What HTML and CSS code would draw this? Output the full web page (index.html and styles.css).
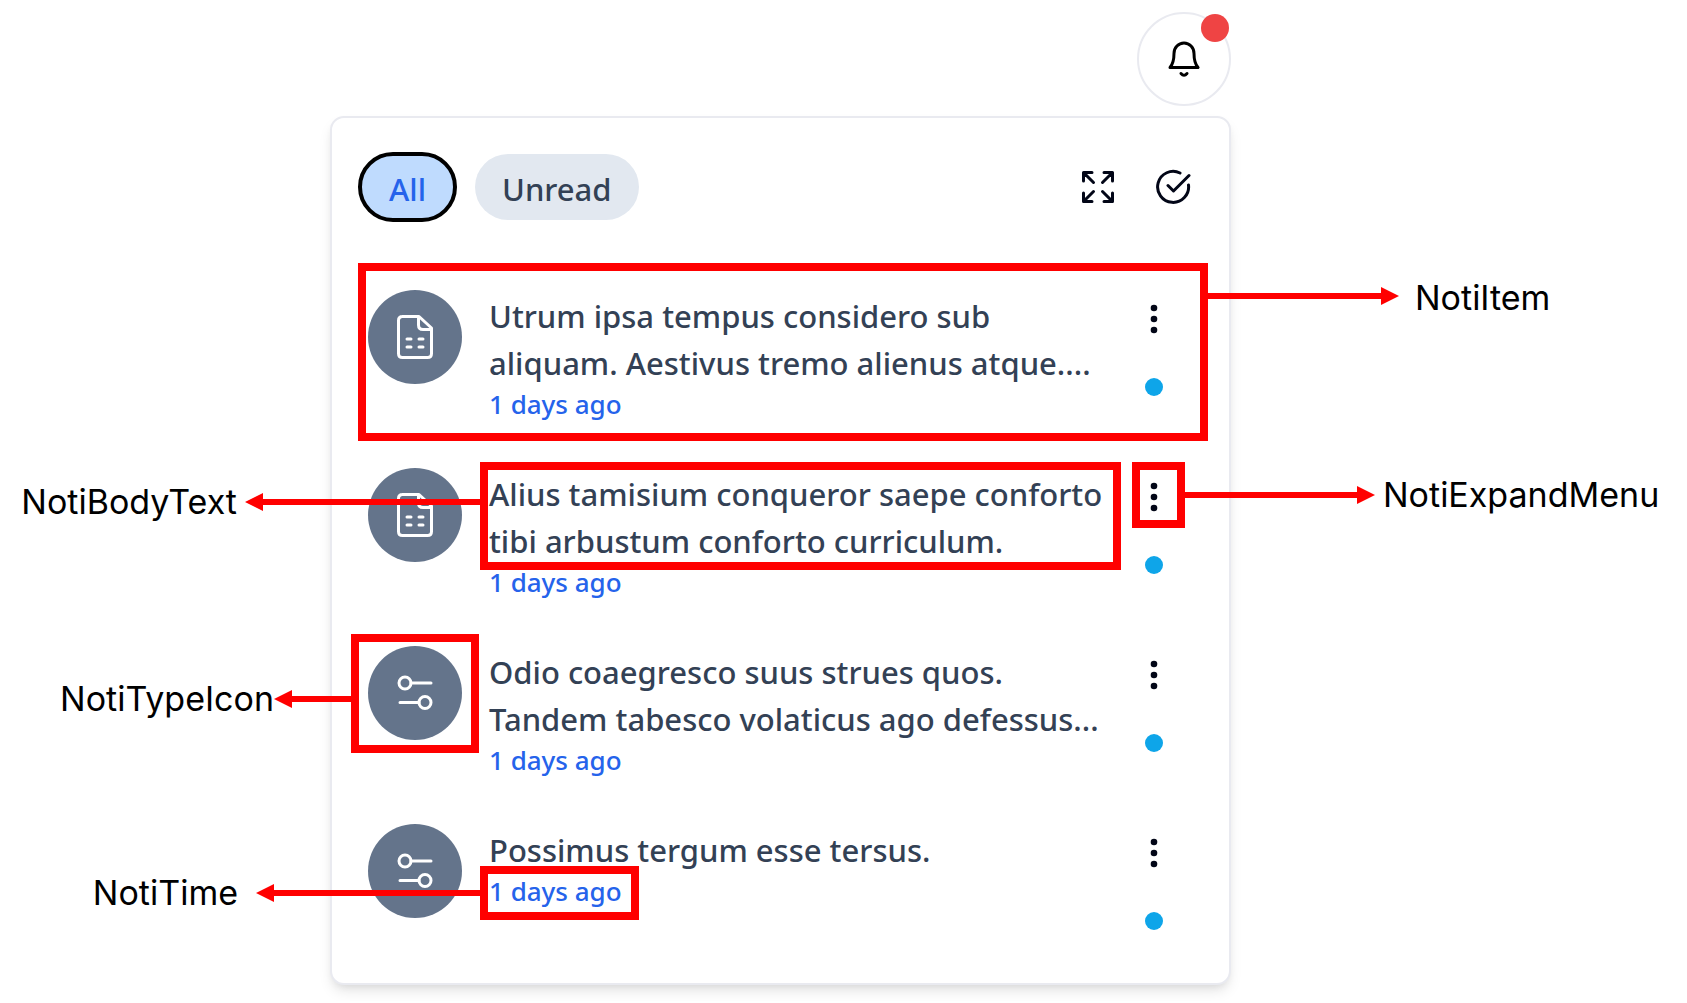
FILE: index.html
```html
<!DOCTYPE html>
<html lang="en">
<head>
  <meta charset="utf-8">
  <meta name="viewport" content="width=device-width, initial-scale=1">
  <title>Notification components</title>
  <link rel="stylesheet" href="styles.css">
</head>
<body>
  <svg class="sprite" aria-hidden="true">
    <symbol id="icon-report" viewBox="0 0 36 44">
      <path d="M5 1.500H22L34.500 13V38.500Q34.500 42.500 30.500 42.500H5.500Q1.500 42.500 1.500 38.500V5.500Q1.500 1.500 5.500 1.500Z M21.500 2V10Q21.500 14.500 26 14.500H34"/>
      <path d="M10 24H14 M22 24H26 M10 32H14 M22 32H26"/>
    </symbol>
    <symbol id="icon-settings" viewBox="0 0 36 36">
      <circle cx="8" cy="8" r="6"/>
      <path d="M14 8H34 M3 27.500H22"/>
      <circle cx="28" cy="27.500" r="6"/>
    </symbol>
    <symbol id="icon-more" viewBox="0 0 8 30">
      <circle cx="4" cy="4" r="3.300"/><circle cx="4" cy="15" r="3.300"/><circle cx="4" cy="26" r="3.300"/>
    </symbol>
    <symbol id="icon-arrow" viewBox="0 0 18 18">
      <path d="M0 0 18 9 0 18Z"/>
    </symbol>
  </svg>

  <main class="page">
    <div class="column">
      <button class="bell" type="button" aria-label="Notifications">
        <svg class="bell-icon" viewBox="0 0 32 36" aria-hidden="true">
          <path d="M2 26.500C5 23 6 19 6 12.500A10 10.500 0 0 1 26 12.500C26 19 27 23 30 26.500Z"/>
          <path d="M13 32.500Q16 36 19 32.500"/>
        </svg>
        <span class="bell-badge"></span>
      </button>

      <section class="panel" aria-label="Notifications">
        <header class="toolbar">
          <button class="tab tab-active" type="button">All</button>
          <button class="tab" type="button">Unread</button>
          <div class="tools">
            <button class="tool" type="button" aria-label="Expand">
              <svg class="tool-icon" viewBox="0 0 36 36" aria-hidden="true">
                <path d="M3.500 12V3.500H12 M4 4 13.500 13.500 M24 3.500H32.500V12 M32 4 22.500 13.500 M3.500 24V32.500H12 M4 32 13.500 22.500 M24 32.500H32.500V24 M32 32 22.500 22.500"/>
              </svg>
            </button>
            <button class="tool" type="button" aria-label="Mark all as read">
              <svg class="tool-icon" viewBox="0 0 36 36" aria-hidden="true">
                <path d="M25 4A15.500 15.500 0 1 0 33.500 16 M13 16.500 18.500 22 34 6.500"/>
              </svg>
            </button>
          </div>
        </header>

        <ul class="list">
          <li class="item">
            <span class="type"><svg class="icon-report"><use href="#icon-report"/></svg></span>
            <div class="content">
              <p class="body">Utrum ipsa tempus considero sub<br>aliquam. Aestivus tremo alienus atque....</p>
              <time class="time">1 days ago</time>
            </div>
            <div class="side">
              <button class="more" type="button" aria-label="More"><svg class="icon-more"><use href="#icon-more"/></svg></button>
              <span class="unread"></span>
            </div>
            <div class="mark mark-item">
              <div class="leader to-right lead-item">
                <span class="line"></span><svg class="head"><use href="#icon-arrow"/></svg>
                <span class="label">NotiItem</span>
              </div>
            </div>
          </li>
          <li class="item">
            <span class="type"><svg class="icon-report"><use href="#icon-report"/></svg></span>
            <div class="content">
              <p class="body">Alius tamisium conqueror saepe conforto<br>tibi arbustum conforto curriculum.</p>
              <time class="time">1 days ago</time>
              <div class="mark mark-body">
                <div class="leader to-left lead-body">
                  <span class="line"></span><svg class="head"><use href="#icon-arrow"/></svg>
                  <span class="label">NotiBodyText</span>
                </div>
              </div>
            </div>
            <div class="side">
              <button class="more" type="button" aria-label="More"><svg class="icon-more"><use href="#icon-more"/></svg></button>
              <span class="unread"></span>
              <div class="mark mark-menu">
                <div class="leader to-right lead-menu">
                  <span class="line"></span><svg class="head"><use href="#icon-arrow"/></svg>
                  <span class="label">NotiExpandMenu</span>
                </div>
              </div>
            </div>
          </li>
          <li class="item">
            <span class="type">
              <svg class="icon-settings"><use href="#icon-settings"/></svg>
              <span class="mark mark-type">
                <span class="leader to-left lead-type">
                  <span class="line"></span><svg class="head"><use href="#icon-arrow"/></svg>
                  <span class="label">NotiTypeIcon</span>
                </span>
              </span>
            </span>
            <div class="content">
              <p class="body">Odio coaegresco suus strues quos.<br>Tandem tabesco volaticus ago defessus...</p>
              <time class="time">1 days ago</time>
            </div>
            <div class="side">
              <button class="more" type="button" aria-label="More"><svg class="icon-more"><use href="#icon-more"/></svg></button>
              <span class="unread"></span>
            </div>
          </li>
          <li class="item">
            <span class="type"><svg class="icon-settings"><use href="#icon-settings"/></svg></span>
            <div class="content">
              <p class="body">Possimus tergum esse tersus.</p>
              <time class="time">1 days ago</time>
              <div class="mark mark-time">
                <div class="leader to-left lead-time">
                  <span class="line"></span><svg class="head"><use href="#icon-arrow"/></svg>
                  <span class="label">NotiTime</span>
                </div>
              </div>
            </div>
            <div class="side">
              <button class="more" type="button" aria-label="More"><svg class="icon-more"><use href="#icon-more"/></svg></button>
              <span class="unread"></span>
            </div>
          </li>
        </ul>
      </section>
    </div>
  </main>
</body>
</html>
```
FILE: styles.css
```css
* {
  box-sizing: border-box;
}

body {
  margin: 0;
  background: #fff;
  color: #334155;
  font-family: "Noto Sans", "Open Sans", sans-serif;
  font-weight: 500;
}

button {
  margin: 0;
  padding: 0;
  border: 0;
  background: none;
  font: inherit;
  color: inherit;
  cursor: pointer;
}

svg {
  display: block;
  flex: none;
  fill: none;
  stroke-linecap: round;
  stroke-linejoin: round;
}

.sprite {
  position: absolute;
  width: 0;
  height: 0;
}

.page {
  display: grid;
  grid-template-columns: 330fr 901fr 456fr;
  padding: 12px 0 16px;
}

.column {
  grid-column: 2;
  display: flex;
  flex-direction: column;
  gap: 10px;
}

/* Bell */
.bell {
  position: relative;
  display: grid;
  place-items: center;
  align-self: flex-end;
  width: 94px;
  height: 94px;
  border: 2px solid #e9eaf0;
  border-radius: 50%;
}

.bell-icon {
  width: 32px;
  height: 36px;
  stroke: #000;
  stroke-width: 3;
}

.bell-badge {
  position: absolute;
  top: 0;
  right: 0;
  width: 28px;
  height: 28px;
  border-radius: 50%;
  background: #ef4444;
}

/* Panel */
.panel {
  padding: 36px 21px 8px 26px;
  border: 2px solid #e9eaf0;
  border-radius: 14px;
  background: #fff;
  box-shadow: 0 8px 14px -2px rgb(0 0 0 / 10%), 0 4px 8px -4px rgb(0 0 0 / 10%);
}

.toolbar {
  display: flex;
  align-items: center;
  gap: 20px;
  padding: 0 17px 43px 2px;
}

.tab {
  min-width: 95px;
  height: 66px;
  padding: 4px 27px 0;
  border-radius: 33px;
  background: #e2e8f0;
  font-size: 31px;
}

.tab-active {
  background: #bfdbfe;
  color: #2563eb;
  outline: 4px solid #000;
  outline-offset: -2px;
}

.tools {
  display: flex;
  gap: 39px;
  margin-left: auto;
}

.tool-icon {
  width: 36px;
  height: 36px;
  stroke: #020617;
  stroke-width: 3;
}

/* Notifications */
.list {
  margin: 0;
  padding: 0;
  list-style: none;
}

.item {
  position: relative;
  display: flex;
  height: 178px;
  padding: 27px 27px 0 10px;
}

.type {
  position: relative;
  display: grid;
  flex: none;
  place-items: center;
  width: 94px;
  height: 94px;
  border-radius: 50%;
  background: #64748b;
}

.icon-report {
  width: 36px;
  height: 44px;
  stroke: #fff;
  stroke-width: 3;
}

.icon-settings {
  width: 36px;
  height: 36px;
  stroke: #fff;
  stroke-width: 3;
}

.content {
  position: relative;
  flex: 1;
  min-width: 0;
  padding-top: 3px;
  margin-left: 27px;
  white-space: nowrap;
}

.body {
  margin: 0;
  font-size: 31px;
  line-height: 47px;
}

.time {
  display: block;
  color: #2563eb;
  font-size: 26px;
  line-height: 34px;
}

.side {
  position: relative;
  display: flex;
  flex: none;
  flex-direction: column;
  align-items: center;
  gap: 44px;
  width: 54px;
  padding-top: 14px;
}

.icon-more {
  width: 8px;
  height: 30px;
  fill: #020617;
}

.unread {
  width: 18px;
  height: 18px;
  border-radius: 50%;
  background: #0ea5e9;
}

/* Red marks and their labels */
.mark {
  position: absolute;
  z-index: 1;
  border: 8px solid #f00;
  pointer-events: none;
}

.mark-item {
  inset: 0;
}

.mark-body {
  top: -6px;
  right: 6px;
  left: -9px;
  height: 108px;
}

.mark-menu {
  top: -6px;
  left: 5px;
  width: 53px;
  height: 66px;
}

.mark-type {
  top: -12px;
  left: -17px;
  width: 128px;
  height: 119px;
}

.mark-time {
  top: 42px;
  left: -9px;
  width: 159px;
  height: 54px;
}

.leader {
  position: absolute;
  display: flex;
  align-items: center;
  height: 18px;
}

.to-right {
  left: calc(100% + 8px);
}

.to-left {
  right: calc(100% + 8px);
  flex-direction: row-reverse;
}

.line {
  flex: none;
  height: 6px;
  background: #f00;
}

.head {
  width: 18px;
  height: 18px;
  fill: #f00;
}

.to-left .head {
  rotate: 180deg;
}

.label {
  color: #000;
  font-family: Inter, "Liberation Sans", sans-serif;
  font-size: 34px;
  font-weight: 400;
  line-height: 40px;
  white-space: nowrap;
}

.lead-item {
  top: 16px;
}

.lead-item .line {
  width: 173px;
}

.lead-item .label {
  padding: 4px 0 0 16px;
}

.lead-body {
  top: 23px;
}

.lead-body .line {
  width: 217px;
}

.lead-body .label {
  padding-right: 8px;
}

.lead-menu {
  top: 16px;
}

.lead-menu .line {
  width: 172px;
}

.lead-menu .label {
  padding-left: 8px;
}

.lead-type {
  top: 48px;
}

.lead-type .line {
  width: 59px;
}

.lead-time {
  top: 10px;
}

.lead-time .line {
  width: 206px;
}

.lead-time .label {
  padding-right: 18px;
}
```
